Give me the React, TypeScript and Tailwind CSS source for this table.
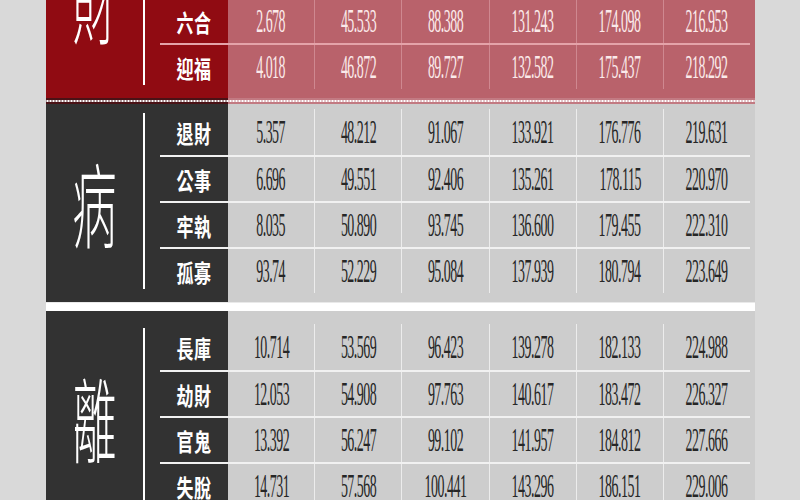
type Row = { label: string; values: string[] };

type Theme = "red" | "dark";

const CJK = "font-['Noto_Sans_CJK_TC','Noto_Sans_CJK_SC',sans-serif]";

const WEALTH: Row[] = [
  { label: "六合", values: ["2.678", "45.533", "88.388", "131.243", "174.098", "216.953"] },
  { label: "迎福", values: ["4.018", "46.872", "89.727", "132.582", "175.437", "218.292"] },
];

const ILLNESS: Row[] = [
  { label: "退財", values: ["5.357", "48.212", "91.067", "133.921", "176.776", "219.631"] },
  { label: "公事", values: ["6.696", "49.551", "92.406", "135.261", "178.115", "220.970"] },
  { label: "牢執", values: ["8.035", "50.890", "93.745", "136.600", "179.455", "222.310"] },
  { label: "孤寡", values: ["93.74", "52.229", "95.084", "137.939", "180.794", "223.649"] },
];

const PARTING: Row[] = [
  { label: "長庫", values: ["10.714", "53.569", "96.423", "139.278", "182.133", "224.988"] },
  { label: "劫財", values: ["12.053", "54.908", "97.763", "140.617", "183.472", "226.327"] },
  { label: "官鬼", values: ["13.392", "56.247", "99.102", "141.957", "184.812", "227.666"] },
  { label: "失脫", values: ["14.731", "57.568", "100.441", "143.296", "186.151", "229.006"] },
];

export default function App() {
  return (
    <div className="w-[800px] h-[500px] overflow-hidden bg-[#d9d9d9]">
      <div className="ml-[46px] w-[709px] -mt-[100px] flex flex-col">
        {/* top section is cut off by the frame; the spacer keeps the big glyph centred */}
        <Section glyph="財" rows={WEALTH} theme="red" topSpacer className="pt-[5px] pb-[9px]" />
        <div className="h-[6px] bg-[radial-gradient(circle,#ffffff_0.9px,transparent_1.4px),linear-gradient(to_right,#4a1216_182px,#c27a82_182px)] bg-[length:3px_6px,100%_100%]" />
        <Section glyph="病" rows={ILLNESS} theme="dark" className="pt-[5px] pb-[9px]" />
        <div className="h-[9px] bg-white border-t border-[#e9e9e9]" />
        <Section glyph="離" rows={PARTING} theme="dark" className="pt-[13px] pb-[9px]" />
      </div>
    </div>
  );
}

function Section({
  glyph,
  rows,
  theme,
  topSpacer,
  className,
}: {
  glyph: string;
  rows: Row[];
  theme: Theme;
  topSpacer?: boolean;
  className?: string;
}) {
  const red = theme === "red";
  const bg = red
    ? "bg-[linear-gradient(to_right,#900b12_182px,#b9626b_182px)]"
    : "bg-[linear-gradient(to_right,#323232_182px,#cdcdcd_182px)]";

  return (
    <section className={`flex pr-[5px] ${bg} ${className ?? ""}`}>
      <div className="w-[97px] flex items-center justify-center">
        <span
          className={`inline-block text-[44px] leading-none font-light text-white scale-y-[2.1] ${CJK}`}
        >
          {glyph}
        </span>
      </div>
      <div className="w-[2px] my-[4px] bg-white" />
      <div className="w-[15px]" />
      <div className="flex-1 flex flex-col">
        {topSpacer && <div className="h-[92px]" />}
        {rows.map((row, i) => (
          <DataRow key={row.label} row={row} theme={theme} first={i === 0 && !topSpacer} />
        ))}
      </div>
    </section>
  );
}

function DataRow({ row, theme, first }: { row: Row; theme: Theme; first: boolean }) {
  const red = theme === "red";
  const line = first ? "" : red ? "border-t-2 border-[#e4a3a9]" : "border-t-2 border-[#f1f1f1]";

  return (
    <div className={`flex h-[46px] ${line}`}>
      <div className="w-[68px] flex items-center justify-center">
        <span
          className={`inline-block text-[17px] leading-none font-bold text-white tracking-[0.5px] scale-y-[1.4] ${CJK}`}
        >
          {row.label}
        </span>
      </div>
      {row.values.map((v, i) => (
        <div
          key={i}
          className={`flex-1 flex items-center justify-center ${
            i === 0 ? "" : red ? "border-l border-[#cf8890]" : "border-l border-[#ececec]"
          }`}
        >
          <span
            className={`inline-block font-['Liberation_Serif',serif] text-[17px] leading-none tracking-[-0.6px] scale-x-[0.82] scale-y-[1.95] ${
              red ? "text-[#fbeaea]" : "text-[#262626]"
            }`}
          >
            {v}
          </span>
        </div>
      ))}
    </div>
  );
}
